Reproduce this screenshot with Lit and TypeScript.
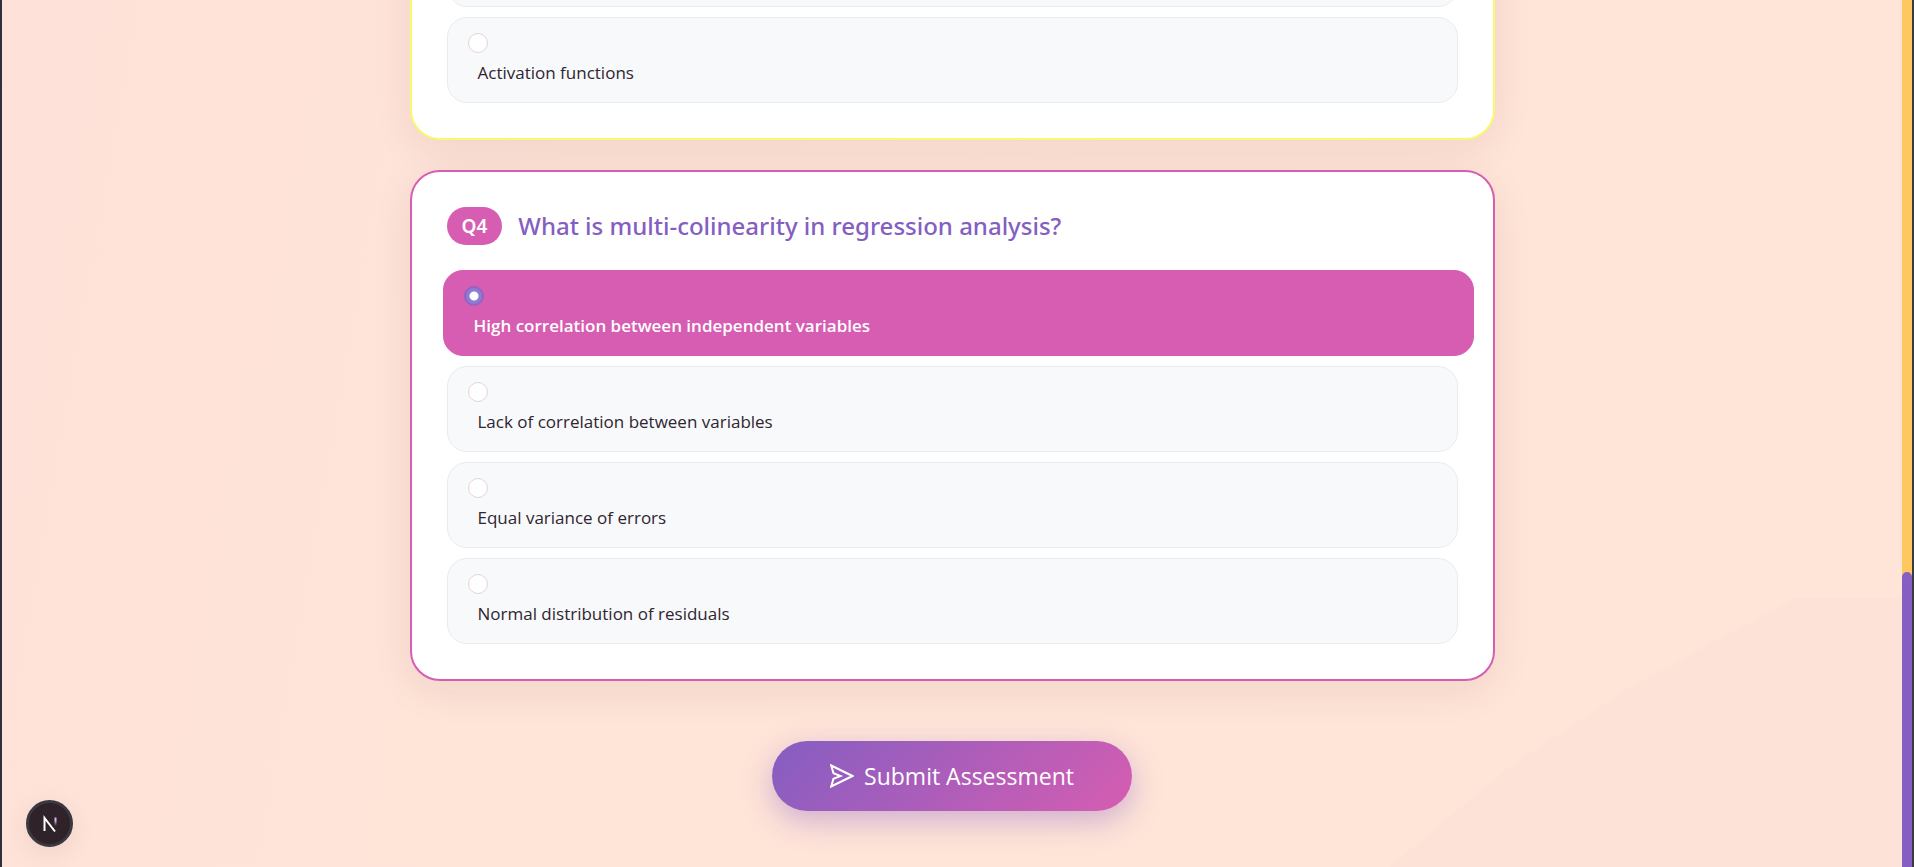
import { LitElement, html, css, nothing } from "lit";
import { customElement, property, state } from "lit/decorators.js";

@customElement("quiz-card")
class QuizCard extends LitElement {
  static styles = css`
    :host {
      display: block;
      box-sizing: border-box;
      padding: 35px;
      border: 2px solid var(--accent);
      border-radius: 30px;
      background: #fff;
      box-shadow: 0 10px 40px rgba(70, 20, 20, 0.08);
    }
    .head {
      display: flex;
      align-items: center;
      gap: 16px;
      margin-bottom: 25px;
      font-family: "Noto Sans", "Open Sans", sans-serif;
      line-height: 38px;
    }
    .badge {
      flex: none;
      padding: 0 15px;
      border-radius: 20px;
      background: var(--accent);
      color: #fff;
      font-size: 19px;
      font-weight: 600;
    }
    .title {
      margin: 0;
      color: #845ec2;
      font-size: 24px;
      font-weight: 500;
    }
    .options {
      display: flex;
      flex-direction: column;
      gap: 10px;
    }
    .option {
      display: flex;
      flex-direction: column;
      gap: 6px;
      box-sizing: border-box;
      min-height: 86px;
      padding: 15px 20px;
      border: 1px solid #e9ecef;
      border-radius: 20px;
      background: #f8f9fb;
      color: #2f2530;
      cursor: pointer;
    }
    .option.selected {
      margin: 0 -16px 0 -4px;
      border-color: #d65db1;
      background: #d65db1;
      color: #fff;
      font-weight: 600;
    }
    .radio {
      appearance: none;
      flex: none;
      width: 20px;
      height: 20px;
      margin: 0;
      border: 1px solid #e6d3da;
      border-radius: 50%;
      background: #fff;
    }
    .radio:checked {
      border: 1px solid #9a5fc0;
      background: radial-gradient(circle, #fff 4px, #8c7cd2 5px, #8c7cd2 7px, #8f63c4 9px);
    }
    .text {
      padding-left: 10px;
      font-size: 17px;
      line-height: 28px;
    }
  `;

  @property() badge = "";
  @property() question = "";
  @property({ type: Array }) options: string[] = [];
  @property({ type: Number }) selected = -1;

  render() {
    return html`
      ${this.question
        ? html`<div class="head">
            <span class="badge">${this.badge}</span>
            <h2 class="title">${this.question}</h2>
          </div>`
        : nothing}
      <div class="options" role="radiogroup">
        ${this.options.map(
          (text, i) => html`<label class="option ${i === this.selected ? "selected" : ""}">
            <input
              class="radio"
              type="radio"
              name="answer"
              .checked=${i === this.selected}
              @change=${() => (this.selected = i)}
            />
            <span class="text">${text}</span>
          </label>`
        )}
      </div>
    `;
  }
}

@customElement("app-root")
class AppRoot extends LitElement {
  static styles = css`
    :host {
      display: block;
      font-family: "Open Sans", "Noto Sans", sans-serif;
    }
    .frame {
      display: flex;
      box-sizing: border-box;
      height: 100vh;
      border-left: 2px solid #2e3040;
      border-right: 2px solid #3b3a42;
      overflow: hidden;
    }
    .page {
      position: relative;
      flex: 1;
      display: flex;
      flex-direction: column;
      justify-content: flex-end;
      align-items: center;
      box-sizing: border-box;
      padding: 0 24px 56px;
      background: linear-gradient(100deg, #fee2d9 0%, #ffe4d8 30%, #ffe5d8 100%);
      overflow: hidden;
    }
    .tint {
      position: absolute;
      right: 0;
      bottom: 0;
      width: 27%;
      height: 31%;
      background: #fce2d7;
      clip-path: polygon(0 100%, 24% 62%, 48% 32%, 79% 0, 100% 0, 100% 100%);
    }
    .cards {
      position: relative;
      display: flex;
      flex-direction: column;
      gap: 30px;
      width: 100%;
      max-width: 1085px;
    }
    .yellow {
      --accent: #f9f871;
    }
    .pink {
      --accent: #d65db1;
    }
    .submit {
      position: relative;
      display: flex;
      align-items: center;
      gap: 10px;
      flex: none;
      height: 70px;
      margin-top: 60px;
      padding: 0 58px;
      border: 0;
      border-radius: 35px;
      background: linear-gradient(135deg, #845ec2, #d65db1);
      box-shadow: 0 10px 30px rgba(132, 94, 194, 0.4);
      color: #fff;
      font-family: inherit;
      font-size: 23px;
      line-height: 32px;
      cursor: pointer;
    }
    .send {
      display: block;
      width: 24px;
      height: 24px;
    }
    .devtools {
      position: absolute;
      left: 24px;
      bottom: 20px;
      display: grid;
      place-items: center;
      box-sizing: border-box;
      width: 47px;
      height: 47px;
      padding: 0;
      border: 3px solid #3a3840;
      border-radius: 50%;
      background: #2f2228;
      box-shadow: 0 6px 24px rgba(70, 20, 20, 0.08);
    }
    .scrollbar {
      flex: none;
      display: flex;
      flex-direction: column;
      justify-content: flex-end;
      width: 10px;
      background: #ffc75f;
    }
    .thumb {
      height: 34%;
      border-radius: 5px 5px 0 0;
      background: #845ec2;
    }
  `;

  @state() previous = ["", "Activation functions"];
  @state() current = [
    "High correlation between independent variables",
    "Lack of correlation between variables",
    "Equal variance of errors",
    "Normal distribution of residuals",
  ];

  render() {
    return html`
      <div class="frame">
        <main class="page">
          <div class="tint"></div>
          <div class="cards">
            <quiz-card class="yellow" .options=${this.previous}></quiz-card>
            <quiz-card
              class="pink"
              badge="Q4"
              question="What is multi-colinearity in regression analysis?"
              .options=${this.current}
              .selected=${0}
            ></quiz-card>
          </div>
          <button class="submit" type="button">
            <svg class="send" viewBox="0 0 24 24" fill="none" stroke="#fff" stroke-width="2" aria-hidden="true">
              <path d="M1.2 1.5 22.5 12 1.2 22.5 3.5 14.8 10.5 12 3.5 9.2Z" />
            </svg>
            Submit Assessment
          </button>
          <button class="devtools" type="button" aria-label="Next.js">
            <svg width="18" height="18" viewBox="0 0 18 18" fill="none" aria-hidden="true">
              <defs>
                <linearGradient id="stem" x1="0" y1="2" x2="0" y2="11" gradientUnits="userSpaceOnUse">
                  <stop offset="0.4" stop-color="#d9b8ee" />
                  <stop offset="1" stop-color="#d9b8ee" stop-opacity="0" />
                </linearGradient>
              </defs>
              <path d="M14.5 2.5V11" stroke="url(#stem)" stroke-width="2" />
              <path d="M3.5 16V3L14 16.5" stroke="#fff" stroke-width="2" />
            </svg>
          </button>
        </main>
        <div class="scrollbar"><div class="thumb"></div></div>
      </div>
    `;
  }
}
